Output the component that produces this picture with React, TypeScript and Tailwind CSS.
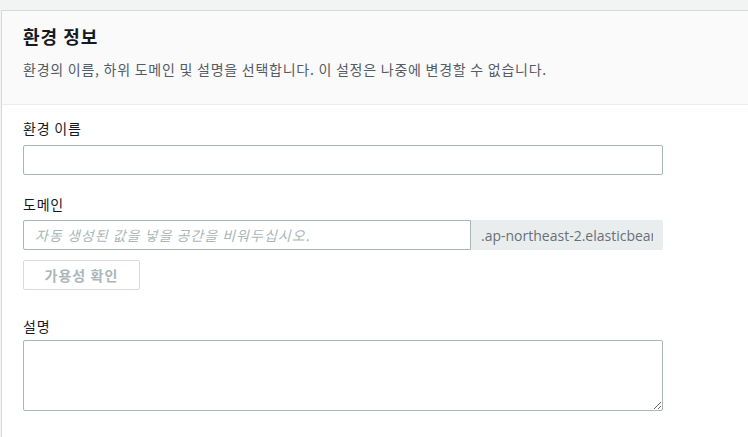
import React from 'react';

const font = { fontFamily: '"Noto Sans CJK KR", "Open Sans", sans-serif' };

export default function App() {
  return (
    <div className="min-h-[437px] bg-[#f2f3f3] pt-[10px] pl-[1px]" style={font}>
      <div className="bg-white border-t border-l border-[#d5dbdb] min-h-[427px]">
        <div className="bg-[#fafafa] border-b border-[#eaeded] pl-[21px] pt-[13px] pb-[25px]">
          <h2 className="text-[18px] leading-[24px] font-bold tracking-[1px] text-[#16191f]">환경 정보</h2>
          <p className="mt-[11px] text-[14px] leading-[20px] tracking-[0.75px] text-[#545b64]">
            환경의 이름, 하위 도메인 및 설명을 선택합니다. 이 설정은 나중에 변경할 수 없습니다.
          </p>
        </div>

        <div className="pl-[21px] pt-[13px]">
          <label className="block text-[14px] leading-[20px] tracking-[0.8px] text-[#16191f]">환경 이름</label>
          <input
            type="text"
            className="mt-[7px] block w-[640px] h-[30px] border border-[#aab7b8] rounded-[2px] bg-white px-3 text-[14px] outline-none"
          />

          <label className="mt-[19px] block text-[14px] leading-[20px] tracking-[0.8px] text-[#16191f]">도메인</label>
          <div className="mt-[6px] flex w-[640px] h-[30px]">
            <input
              type="text"
              placeholder="자동 생성된 값을 넣을 공간을 비워두십시오."
              className="w-[448px] h-full border border-[#aab7b8] rounded-l-[2px] bg-white px-[11px] text-[14px] italic tracking-[1px] placeholder:text-[#aab7b8] outline-none"
            />
            <div className="flex-1 h-full bg-[#eaeded] rounded-r-[2px] pl-[10px] pr-[10px] flex items-center overflow-hidden">
              <span
                className="text-[14px] text-[#687078] whitespace-nowrap overflow-hidden block"
                style={{ fontFamily: '"Open Sans", sans-serif' }}
              >
                .ap-northeast-2.elasticbeanstalk.com
              </span>
            </div>
          </div>

          <button className="mt-[10px] w-[117px] h-[30px] border border-[#d5dbdb] rounded-[2px] bg-white text-[14px] font-bold tracking-[1.1px] text-[#aab7b8]">
            가용성 확인
          </button>

          <label className="mt-[26px] block text-[14px] leading-[20px] tracking-[0.8px] text-[#16191f]">설명</label>
          <textarea className="mt-[4px] block w-[640px] h-[71px] border border-[#aab7b8] rounded-[2px] bg-white px-3 text-[14px] outline-none" />
        </div>
      </div>
    </div>
  );
}
